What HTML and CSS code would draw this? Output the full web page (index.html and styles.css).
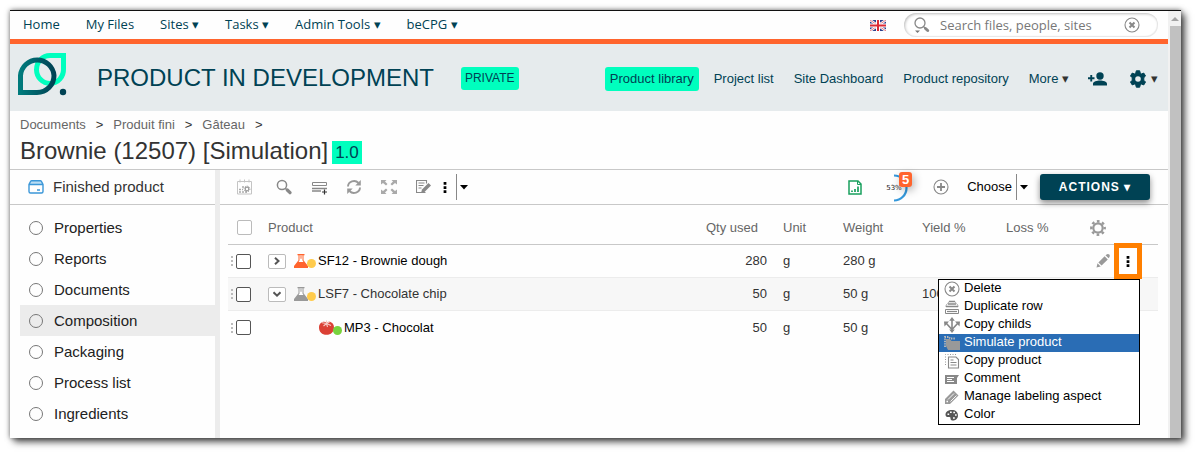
FILE: index.html
```html
<!DOCTYPE html>
<html lang="en">
<head>
<meta charset="utf-8">
<title>Brownie (12507) [Simulation]</title>
<link rel="stylesheet" href="styles.css">
</head>
<body>
<svg class="defs" width="0" height="0" aria-hidden="true">
  <defs>
    <linearGradient id="teal" x1="0" x2="1" y1="0" y2="0"><stop offset="0" stop-color="#007a7c"/><stop offset="1" stop-color="#004254"/></linearGradient>
    <symbol id="magnifier" viewBox="0 0 16 16"><circle cx="6" cy="6" r="4.600" fill="none" stroke="currentColor" stroke-width="1.500"/><path d="M9.300 9.300l2 2" stroke="currentColor" stroke-width="1.300"/><path d="M11.300 11l2.700 2.700" stroke="currentColor" stroke-width="3.200" stroke-linecap="round"/></symbol>
    <symbol id="cross-circle" viewBox="0 0 16 16"><circle cx="8" cy="8" r="7" fill="none" stroke="currentColor" stroke-width="1.100"/><path d="M5.500 5.500l5 5M10.500 5.500l-5 5" stroke="currentColor" stroke-width="2"/></symbol>
    <symbol id="kebab" viewBox="0 0 4 12"><path d="M.5 0h3v3h-3zM.5 4.500h3v3h-3zM.5 9h3v3h-3z" fill="#000"/></symbol>
    <symbol id="caret" viewBox="0 0 8 5"><path d="M0 0h8L4 4.500z" fill="#000"/></symbol>
    <symbol id="flask" viewBox="0 0 14 14"><path d="M3.500 0h7v1.300h-1v5L14 12v2H0v-2l4.500-5.700v-5h-1z" fill="currentColor"/><path d="M5.500 1.300h3v5.200l1 1.500h-5l1-1.500z" fill="#fff"/><path d="M6.500 1.300h1v3.500h-1z" fill="currentColor"/></symbol>
  </defs>
</svg>
<div class="window">
  <div class="page">
    <header>
      <div class="topbar">
        <nav class="menu" aria-label="Main">
          <a href="#">Home</a><a href="#">My Files</a><a href="#">Sites ▾</a><a href="#">Tasks ▾</a><a href="#">Admin Tools ▾</a><a href="#">beCPG ▾</a>
        </nav>
        <button class="plain flag" aria-label="Language: English">
          <svg width="16" height="11" viewBox="0 0 16 11"><path fill="#2b3f8c" d="M0 0h16v11H0z"/><path d="M0 0l16 11M16 0L0 11" stroke="#fff" stroke-width="2.400"/><path d="M0 0l16 11M16 0L0 11" stroke="#e0555f" stroke-width=".8"/><path d="M8 0v11M0 5.500h16" stroke="#fff" stroke-width="4"/><path d="M8 0v11M0 5.500h16" stroke="#dc2a35" stroke-width="2"/></svg>
        </button>
        <form class="search">
          <svg width="17" height="17" viewBox="0 0 17 17"><circle cx="7" cy="6" r="5" fill="none" stroke="#888" stroke-width="1.300"/><path d="M10.500 9.500l2 2" stroke="#888" stroke-width="1.300"/><path d="M12.500 11.500l2.200 2" stroke="#888" stroke-width="3" stroke-linecap="round"/><path d="M2 13.500h5L4.500 16z" fill="#777"/></svg>
          <input type="text" aria-label="Search" placeholder="Search files, people, sites">
          <button type="button" class="plain" aria-label="Clear search"><svg width="16" height="16"><use href="#cross-circle"/></svg></button>
        </form>
      </div>
      <div class="site">
        <svg class="logo" width="50" height="51" viewBox="0 0 50 51"><path d="M45.500 2.500H32A13.500 14 0 1 0 45.500 16z" fill="none" stroke="#00ffbe" stroke-width="5"/><path d="M2.500 39.500V22.500A16.800 16.800 0 0 1 36 22.500C36 32 28.500 39.500 19 39.500z" fill="none" stroke="url(#teal)" stroke-width="5"/><circle cx="45" cy="39" r="3.200" fill="#004254"/></svg>
        <h1>PRODUCT IN DEVELOPMENT</h1>
        <span class="visibility">PRIVATE</span>
        <nav class="sitenav" aria-label="Site">
          <a href="#" class="active">Product library</a><a href="#">Project list</a><a href="#">Site Dashboard</a><a href="#">Product repository</a><a href="#">More <span class="wedge">▾</span></a>
        </nav>
        <div class="sitetools">
          <button class="plain" aria-label="Invite users"><svg width="19" height="14" viewBox="0 0 19 14"><circle cx="12" cy="4" r="3.700" fill="#004254"/><path d="M5 13.500v-1.700C5 9.600 9 8.500 12 8.500s7 1.100 7 3.300v1.700zM2.300 3h1.900v2.300h2.300v1.900H4.200v2.300H2.300V7.200H0V5.300h2.300z" fill="#004254"/></svg></button>
          <button class="plain gear" aria-label="Site settings"><svg width="18" height="18" viewBox="0 0 18 18"><path d="M7.300.8h3.400l.5 2.300 1.300.8 2.300-.8 1.700 2.900-1.700 1.700v2.600l1.700 1.700-1.700 2.900-2.300-.8-1.300.8-.5 2.300H7.300l-.5-2.300-1.300-.8-2.300.8L1.500 12l1.700-1.700V7.700L1.500 6l1.700-2.900 2.300.8 1.300-.8z" fill="#004254" stroke="#004254" stroke-linejoin="round"/><circle cx="9" cy="9" r="2.800" fill="#e6ebed"/></svg><span class="wedge">▾</span></button>
        </div>
      </div>
    </header>
    <div class="heading">
      <nav class="crumbs" aria-label="Breadcrumb"><a href="#">Documents</a><span>&gt;</span><a href="#">Produit fini</a><span>&gt;</span><a href="#">Gâteau</a><span>&gt;</span></nav>
      <div class="docname"><h2>Brownie (12507) [Simulation]</h2><span class="version">1.0</span></div>
    </div>
    <div class="body">
      <aside class="sidebar">
        <h3><svg width="16" height="14" viewBox="0 0 16 14"><path d="M3.500.8h9L15 4H1z" fill="#b9dcf3"/><path d="M1 4.500v7A1.500 1.500 0 0 0 2.500 13h11a1.500 1.500 0 0 0 1.500-1.500v-7L13.500 1.500A1.500 1.500 0 0 0 12.300.8H3.700a1.500 1.500 0 0 0-1.200.7zM1 4.500h14M9 10h3" fill="none" stroke="#3b97d8" stroke-width="1.400"/></svg>Finished product</h3>
        <ul class="views">
          <li><a href="#"><i></i>Properties</a></li>
          <li><a href="#"><i></i>Reports</a></li>
          <li><a href="#"><i></i>Documents</a></li>
          <li><a href="#" class="selected" aria-current="page"><i></i>Composition</a></li>
          <li><a href="#"><i></i>Packaging</a></li>
          <li><a href="#"><i></i>Process list</a></li>
          <li><a href="#"><i></i>Ingredients</a></li>
        </ul>
      </aside>
      <main>
        <div class="toolbar">
          <button class="plain" aria-label="Calendar"><svg width="16" height="16" viewBox="0 0 16 16"><path d="M1.500 2.500h14v12.500h-14z" fill="none" stroke="#c4c4c4"/><path d="M4 .5v3M8.500 .5v3M13 .5v3" stroke="#c4c4c4"/><path d="M3 13h2M6 13h2M9 13h2M3 10.500h2M6 10.500h1M6 8h2" stroke="#aaa" stroke-width="1.500"/><circle cx="11" cy="10" r="1.800" fill="none" stroke="#999" stroke-width="1.200"/><circle cx="11" cy="10" r="2.900" fill="none" stroke="#999" stroke-dasharray="1.140 1.140"/></svg></button>
          <div class="tools">
            <button class="plain" aria-label="Search"><svg width="16" height="16"><use href="#magnifier"/></svg></button>
            <button class="plain" aria-label="Add row"><svg width="16" height="16" viewBox="0 0 16 16"><path d="M1.500 3.500h14v3h-14z" fill="none" stroke="#888"/><path d="M1 9.500h15M1 12h9" stroke="#888" stroke-width="1.600"/><path d="M13.500 10.500v5M11 13h5" stroke="#333" stroke-width="1.200"/></svg></button>
            <button class="plain" aria-label="Refresh"><svg width="16" height="16" viewBox="0 0 16 16"><path d="M2 7.500A6 5.500 0 0 1 12.500 4M14 8.500A6 5.500 0 0 1 3.500 12" fill="none" stroke="#999" stroke-width="1.900"/><path d="M14.800 1v5.500H9.300zM1.200 15V9.500h5.500z" fill="#999"/></svg></button>
            <button class="plain" aria-label="Full screen"><svg width="16" height="16" viewBox="0 0 16 16"><path d="M0 1h5.500L4 2.500 6.500 5 5 6.500 2 4 0 5.500zM16 1h-5.500L12 2.500 9.500 5 11 6.500 14 4l2 1.500zM0 15h5.500L4 13.500 6.500 11 5 9.500 2 12 0 10.500zM16 15h-5.500l1.500-1.500L9.500 11 11 9.500l3 2.500 2-1.500z" fill="#aaa"/></svg></button>
            <button class="plain" aria-label="Edit"><svg width="16" height="16" viewBox="0 0 16 16"><path d="M9.500 13.500h-9v-12h10v3" fill="none" stroke="#888" stroke-width="1.100"/><path d="M2.500 4h6M2.500 6.500h5M2.500 9h3" stroke="#888"/><path d="M5 14l1-3.500 6.500-6.500L15 6.500 8.500 13z" fill="#888"/></svg></button>
          </div>
          <button class="plain split"><span class="label" aria-label="More actions"><svg width="4" height="11"><use href="#kebab"/></svg></span><span class="arrow"><svg width="8" height="5"><use href="#caret"/></svg></span></button>
          <div class="right">
            <button class="plain" aria-label="Export"><svg width="14" height="15" viewBox="0 0 14 15"><path d="M1 1h9l3 3v10H1z" fill="#fff" stroke="#18a05e" stroke-width="1.500"/><path d="M9.500 1v3.500H13" fill="none" stroke="#18a05e"/><path d="M4 12v-1.500M7 12V9M10 12V6.500" stroke="#18a05e" stroke-width="1.700"/></svg></button>
            <div class="gauge"><svg width="30" height="28" viewBox="0 0 30 28"><path d="M14 1.500A12.500 12.500 0 0 1 14 26.500" fill="none" stroke="#3498db" stroke-width="2.200"/></svg><span class="percent">53%</span><span class="count">5</span></div>
            <button class="plain" aria-label="Add"><svg width="16" height="16" viewBox="0 0 16 16"><circle cx="8" cy="8" r="7" fill="none" stroke="#888" stroke-width="1.100"/><path d="M8 4v8M4 8h8" stroke="#888" stroke-width="1.800"/></svg></button>
            <button class="plain split"><span class="label">Choose</span><span class="arrow"><svg width="8" height="5"><use href="#caret"/></svg></span></button>
            <button class="actions">ACTIONS ▾</button>
          </div>
        </div>
        <div class="grid">
          <table>
            <colgroup><col class="c-check"><col><col class="c-qty"><col class="c-unit"><col class="c-weight"><col class="c-pct"><col class="c-pct"><col class="c-act"></colgroup>
            <thead>
              <tr><th><input type="checkbox" aria-label="Select all"></th><th>Product</th><th>Qty used</th><th>Unit</th><th>Weight</th><th>Yield %</th><th>Loss %</th>
              <th><button class="plain" aria-label="Columns"><svg width="16" height="16" viewBox="0 0 16 16"><circle cx="8" cy="8" r="4.700" fill="none" stroke="#999" stroke-width="2.200"/><circle cx="8" cy="8" r="6.700" fill="none" stroke="#999" stroke-width="2.400" stroke-dasharray="2.660 2.600" stroke-dashoffset="1.330"/></svg></button></th></tr>
            </thead>
            <tbody>
              <tr>
                <td><span class="pick"><i class="drag"></i><input type="checkbox" aria-label="Select SF12"></span></td>
                <td><div class="product"><button class="toggle" aria-label="Expand"><svg width="8" height="8" viewBox="0 0 8 8"><path d="M2 .8L5.500 4 2 7.200" fill="none" stroke="#555" stroke-width="2"/></svg></button><svg class="kind semi" width="14" height="14"><use href="#flask"/></svg><i class="state"></i><a href="#">SF12 - Brownie dough</a></div></td>
                <td class="num">280</td><td>g</td><td>280 g</td><td></td><td></td>
                <td><div class="rowacts">
                  <button class="plain" aria-label="Edit row"><svg width="16" height="16" viewBox="0 0 16 16"><path d="M1.500 14.500l1-4.200 3.200 3.200zM3.400 9.400l6.200-6.200 3.200 3.200-6.200 6.200zM10.500 2.300L12 1.200q1.300-.6 2.300.3.900 1 .2 2.500l-.9 1.300z" fill="#999"/></svg></button>
                  <div class="more"><button class="plain kebab" aria-label="More" aria-expanded="true"><svg width="4" height="11"><use href="#kebab"/></svg></button>
                    <ul class="dropdown">
                      <li><button><svg width="16" height="16"><use href="#cross-circle"/></svg>Delete</button></li>
                      <li><button><svg width="16" height="16" viewBox="0 0 16 16"><path d="M5 2.500h6M4 5h8M2 7.500h12" fill="none" stroke="#888" stroke-width="1.300"/><path d="M5 2.500L3.500 5M11 2.500L12.500 5M3 5L1.500 7.500M13 5l1.500 2.500" stroke="#999" stroke-width=".8"/><path d="M1.500 10.500h13v4h-13z" fill="none" stroke="#888"/><path d="M3 12.500h10" stroke="#888" stroke-width="1.200"/></svg>Duplicate row</button></li>
                      <li><button><svg width="16" height="16" viewBox="0 0 16 16"><path d="M8 3v10M2 6l6 6.500L14 6" fill="none" stroke="#888" stroke-width="1.600"/><path d="M8 0l2.800 3.800H5.200zM0 4.500h5L.5 9.500zM16 4.500h-5l4.500 5zM5.200 12.500h5.600L8 16z" fill="#888"/></svg>Copy childs</button></li>
                      <li><button class="on"><svg width="16" height="16" viewBox="0 0 16 16"><path d="M1 12V2h4l1 1.500h5" fill="none" stroke="#bbb" stroke-width="1.800" stroke-dasharray="1.400 1"/><path d="M2 4h4l1.500 2H16v9H4L2 11z" fill="#999"/></svg>Simulate product</button></li>
                      <li><button><svg width="16" height="16" viewBox="0 0 16 16"><path d="M1.500 12V1.500H12" fill="none" stroke="#999" stroke-dasharray="1 1.500"/><path d="M4.500 4h7.500l2.500 2.500V15h-10z" fill="#fff" stroke="#888" stroke-width="1.100"/><path d="M6.500 7h3M6.500 9.500h6M6.500 12h6" stroke="#888"/></svg>Copy product</button></li>
                      <li><button><svg width="16" height="16" viewBox="0 0 16 16"><path d="M1 4h14l-2 3v6H1z" fill="#888"/><path d="M3 6.500h7M3 8.500h5M3 10.500h7" stroke="#fff"/></svg>Comment</button></li>
                      <li><button><svg width="16" height="16" viewBox="0 0 16 16"><path d="M1 10L9.500 1.500 14.500 6.500 6 15H1z" fill="#999"/><path d="M4 10.500l6-6M6.500 12.500l6-6" stroke="#fff" stroke-width=".9"/><path d="M2.500 12.500h1.500" stroke="#fff" stroke-width="1.400"/></svg>Manage labeling aspect</button></li>
                      <li><button><svg width="16" height="16" viewBox="0 0 16 16"><path d="M8 3C4 3 1.500 5 1.500 7.800c0 2 1.800 2.500 3.300 2.200 1.700-.3 1.800.7 1.700 1.700 0 1.200 1 1.800 2.500 1.800 3 0 5-2.300 5-5C14 5 11.500 3 8 3z" fill="#555"/><path d="M3.500 7.300h1.700M6 5.300h1.700M9.300 5.500H11M11 8h1.700M9 11h1.800" stroke="#fff" stroke-width="1.500"/></svg>Color</button></li>
                    </ul>
                  </div>
                </div></td>
              </tr>
              <tr class="alt">
                <td><span class="pick"><i class="drag"></i><input type="checkbox" aria-label="Select LSF7"></span></td>
                <td><div class="product"><button class="toggle" aria-label="Collapse"><svg width="8" height="8" viewBox="0 0 8 8"><path d="M.5 2.300L4 5.700l3.500-3.400" fill="none" stroke="#555" stroke-width="2"/></svg></button><svg class="kind" width="14" height="14"><use href="#flask"/></svg><i class="state"></i><a href="#">LSF7 - Chocolate chip</a></div></td>
                <td class="num">50</td><td>g</td><td>50 g</td><td>100</td><td></td><td></td>
              </tr>
              <tr>
                <td><span class="pick"><i class="drag"></i><input type="checkbox" aria-label="Select MP3"></span></td>
                <td><div class="product child"><svg class="kind" width="15" height="15" viewBox="0 0 15 15"><path d="M7.500 2.500C11 .5 15 3 15 7.500c0 4.500-3 7.300-7.500 7.300S0 12 0 7.500C0 3 4 .5 7.500 2.500z" fill="#db4035"/><path d="M7.500 3.500L3 2.800M7.500 3.500L4.500 6M7.500 3.500l1 3.500M7.500 3.500L12 5.500M7.500 3.500L11 1.500M7.500 4V.5" stroke="#f6c9c4" stroke-width="1.100"/></svg><i class="state valid"></i><a href="#">MP3 - Chocolat</a></div></td>
                <td class="num">50</td><td>g</td><td>50 g</td><td></td><td></td><td></td>
              </tr>
            </tbody>
          </table>
        </div>
      </main>
    </div>
  </div>
  <div class="scrollbar" aria-hidden="true"><svg width="13" height="15" viewBox="0 0 13 15"><path d="M3 10h8L7 6z" fill="#a3a3a3"/></svg><div class="thumb"></div></div>
</div>
</body>
</html>
```

FILE: styles.css
```css
* { box-sizing: border-box; }
body {
  margin: 0;
  min-height: 100vh;
  padding: 10px 16px 16px 10px;
  display: flex;
  background: #fff;
  color: #333;
  font: 13px/16px "Liberation Sans", Arial, sans-serif;
}
.defs { position: absolute; }
svg { display: block; flex: none; }
a { color: inherit; text-decoration: none; }
h1, h2, h3, ul { margin: 0; padding: 0; font-weight: normal; }
ul { list-style: none; }
button { font: inherit; color: inherit; cursor: pointer; }
.plain { display: flex; align-items: center; border: 0; padding: 0; background: none; }

.window {
  flex: 1;
  min-width: 0;
  display: flex;
  background: #fefefe;
  border-top: 1px solid #111;
  box-shadow: 4px 4px 7px rgba(0, 0, 0, .65), 0 0 5px rgba(0, 0, 0, .5);
}
.page { flex: 1; min-width: 0; display: flex; flex-direction: column; }
.scrollbar { width: 13px; display: flex; flex-direction: column; background: #f1f1f1; }
.thumb { flex: 1; margin-left: 2px; background: #c1c1c1; }

.topbar {
  display: flex;
  align-items: center;
  height: 33px;
  padding: 0 10px 0 13px;
  border-bottom: 5px solid #ff642d;
  color: #004254;
  font-family: "Open Sans", "Noto Sans", sans-serif;
}
.menu { display: flex; gap: 26px; flex: 1; padding-bottom: 2px; white-space: nowrap; }
.flag { margin-right: 18px; }
.search {
  display: flex;
  align-items: center;
  gap: 10px;
  width: 254px;
  height: 24px;
  padding: 0 18px 0 9px;
  border-radius: 12px;
  background: #fff;
  box-shadow: inset 1px 1px 3px #bbb, inset -1px -1px 1px #eee;
  color: #888;
}
.search input {
  flex: 1;
  min-width: 0;
  border: 0;
  padding: 0;
  background: none;
  font: inherit;
}
.search input::placeholder { color: #777; opacity: 1; }

.site {
  display: flex;
  align-items: center;
  height: 67px;
  padding: 2px 10px 0 8px;
  background: #e6ebed;
  color: #004254;
}
.site h1 { margin: 0 27px 0 29px; padding-bottom: 2px; font-size: 24px; line-height: 28px; white-space: nowrap; }
.visibility { padding: 3px 4px 4px; border-radius: 3px; background: #00ffbe; font-size: 12px; }
.sitenav { display: flex; gap: 10px; margin-left: auto; white-space: nowrap; }
.sitenav a { padding: 4px 5px; border-radius: 3px; }
.sitenav .active { background: #00ffbe; }
.wedge { color: #333; }
.sitetools { display: flex; align-items: center; gap: 22px; margin-left: 14px; }
.gear { gap: 4px; }

.heading { padding: 6px 10px 2px; border-bottom: 1px solid #c8c8c8; }
.crumbs { display: flex; gap: 10px; color: #666; }
.crumbs span { color: #333; }
.docname { display: flex; align-items: center; gap: 4px; padding: 4px 0 2px; }
.docname h2 { font-size: 24px; line-height: 28px; }
.version { margin-top: 3px; padding: 2px 3px; background: #00ffbe; color: #004254; font-size: 17px; line-height: 19px; }

.body { flex: 1; display: flex; }
.sidebar { width: 210px; border-right: 5px solid #ececec; font-size: 15px; }
.sidebar h3 {
  display: flex;
  align-items: center;
  gap: 9px;
  height: 35px;
  padding-left: 18px;
  border-bottom: 1px solid #c8c8c8;
  font-size: 15px;
}
.views { padding: 7px 0 0 10px; color: #222; }
.views a { display: flex; align-items: center; gap: 11px; height: 31px; padding-left: 9px; }
.views i { width: 14px; height: 14px; border: 1px solid #777; border-radius: 50%; }
.views .selected { background: #ececec; }

main { flex: 1; min-width: 0; }
.toolbar {
  display: flex;
  align-items: center;
  height: 35px;
  padding: 0 18px 0 16px;
  border-bottom: 1px solid #c8c8c8;
}
.tools { display: flex; gap: 19px; margin: 0 11px 0 24px; color: #888; }
.split { color: #000; }
.split .label { padding-right: 4px; }
.tools + .split .label { padding-right: 9px; }
.split .arrow { display: flex; align-items: center; height: 26px; padding-left: 3px; border-left: 1px solid #888; }
.right { display: flex; align-items: center; margin-left: auto; gap: 18px; }
.gauge { position: relative; margin: 2px 6px 0 0; }
.gauge + button { margin-left: -1px; }
.percent {
  position: absolute;
  left: 6px;
  top: 6px;
  color: #222;
  font: 7px/16px "DejaVu Sans", sans-serif;
}
.count {
  position: absolute;
  right: -2px;
  top: -2px;
  width: 13px;
  border-radius: 3px;
  background: #ff642d;
  color: #fff;
  font-weight: bold;
  text-align: center;
  line-height: 15px;
  box-shadow: 2px 3px 8px rgba(0, 0, 0, .3);
}
.actions {
  width: 110px;
  height: 26px;
  margin-left: -6px;
  border: 0;
  border-radius: 3px;
  padding: 0;
  background: #004254;
  color: #fff;
  font-size: 12px;
  font-weight: bold;
  letter-spacing: 1px;
  box-shadow: 0 3px 6px rgba(0, 0, 0, .45);
}

.grid { padding: 0 10px 0 8px; }
table { width: 100%; table-layout: fixed; border-collapse: separate; border-spacing: 0; }
.c-check { width: 32px; }
.c-qty { width: 77px; }
.c-unit { width: 60px; }
.c-weight { width: 79px; }
.c-pct { width: 84px; }
.c-act { width: 76px; }
th, td { padding: 0 8px; text-align: left; font-weight: normal; white-space: nowrap; }
th { height: 40px; padding-top: 6px; border-bottom: 1px solid #c8c8c8; color: #666; }
td { height: 33px; border-bottom: 1px solid #ececec; }
tbody tr:last-child td { border-bottom: 0; }
.num { text-align: right; }
.alt td { background: #f7f7f7; }
input[type="checkbox"] {
  appearance: none;
  display: block;
  width: 15px;
  height: 15px;
  margin: 0;
  border: 1px solid #555;
  border-radius: 2px;
  background: #fff;
}
th:first-child { padding-left: 9px; }
th input[type="checkbox"] { border-color: #bbb; }
td:first-child { padding: 0 0 0 3px; }
.pick { display: flex; align-items: center; gap: 3px; }
.drag { width: 2px; height: 10px; background: repeating-linear-gradient(#bbb 0 2px, transparent 2px 4px); }
.product { display: flex; align-items: center; color: #000; }
.alt .product { color: #333; }
.toggle {
  display: flex;
  align-items: center;
  justify-content: center;
  width: 18px;
  height: 15px;
  margin-right: 8px;
  padding: 0;
  border: 1px solid #bbb;
  border-radius: 2px;
  background: #fff;
}
.kind { color: #999; }
.semi { color: #ff642d; }
.state { width: 9px; height: 9px; margin: 5px 2px 0 -1px; border-radius: 50%; background: #ffcb4c; }
.valid { background: #78d23d; }
.child { padding-left: 51px; }
.rowacts { display: flex; align-items: center; justify-content: flex-end; gap: 8px; margin-right: 13px; }
.more { position: relative; }
.kebab { width: 18px; height: 26px; justify-content: center; outline: 5px solid #ff7f00; background: #fff; }
.dropdown {
  position: absolute;
  z-index: 2;
  top: 31px;
  right: -3px;
  width: 202px;
  border: 1px solid #000;
  background: #fff;
  color: #000;
}
.dropdown button {
  display: flex;
  align-items: center;
  gap: 4px;
  width: 100%;
  height: 18px;
  padding: 0 0 2px 5px;
  border: 0;
  background: none;
}
.dropdown svg { margin-top: 2px; color: #888; }
.dropdown .on { background: #2a6db5; color: #fff; }
```
